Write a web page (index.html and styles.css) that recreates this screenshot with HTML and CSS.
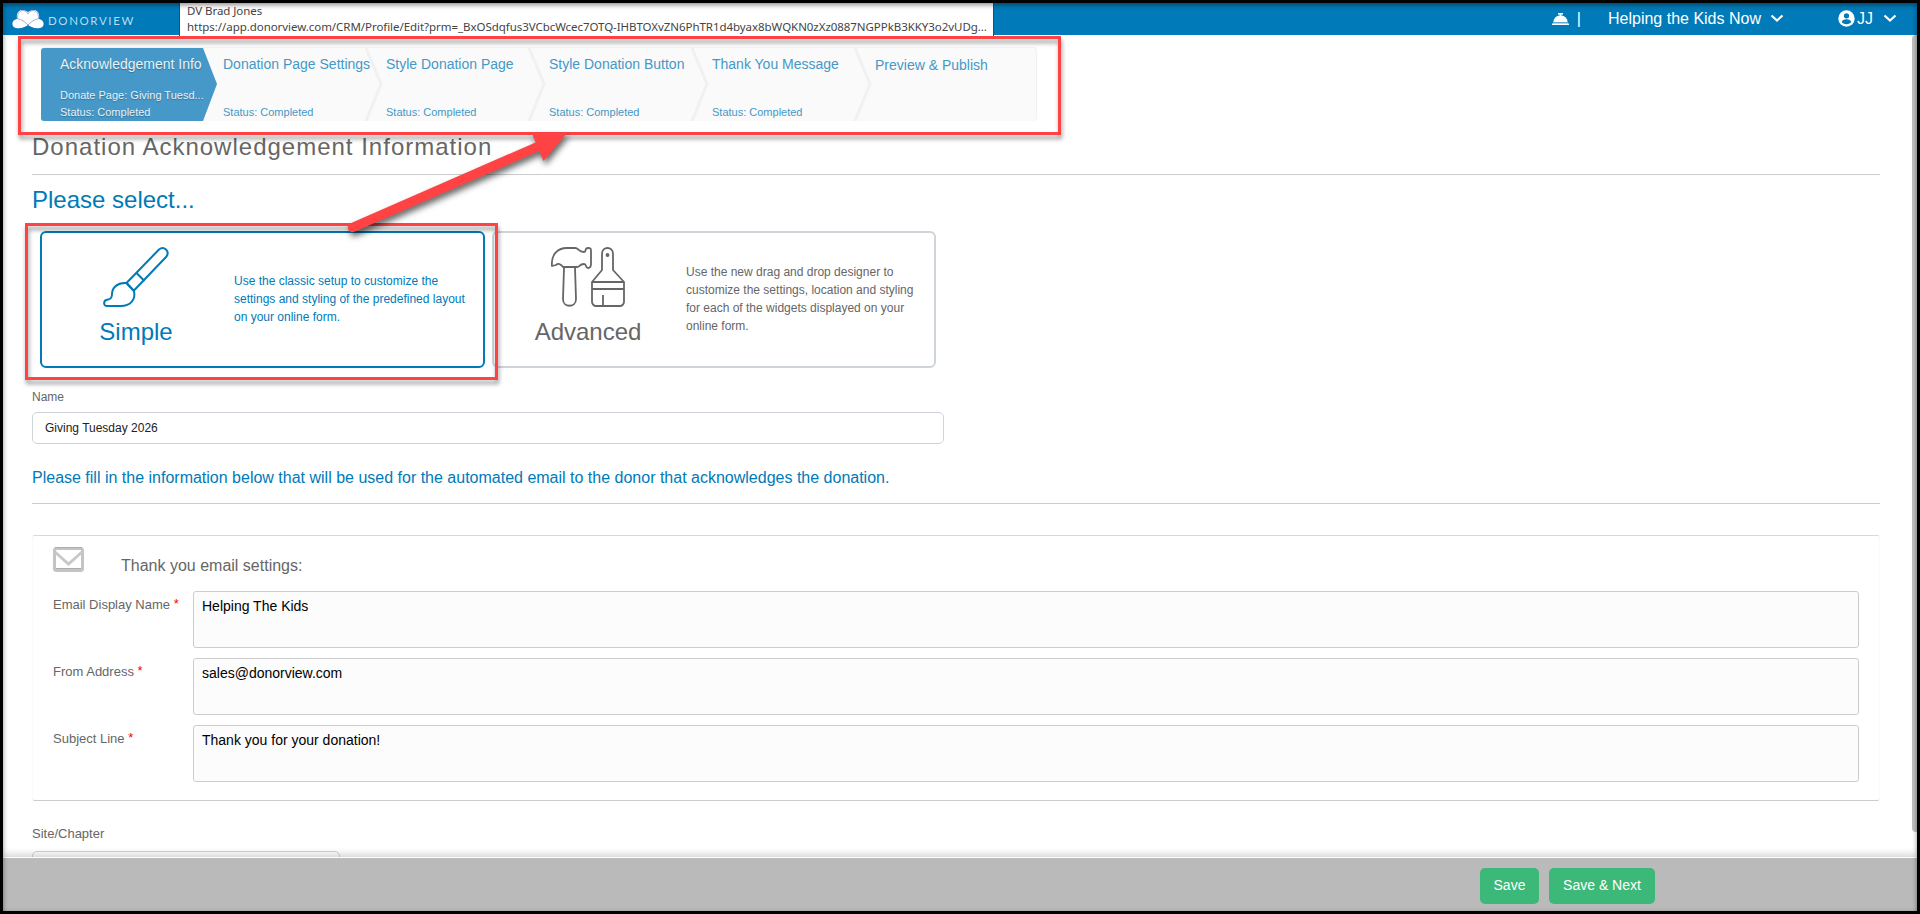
FILE: index.html
```html
<!DOCTYPE html>
<html>
<head>
	<title>Donation Acknowledgement Information</title>
	<meta charset="utf-8" />
	<link rel="stylesheet" href="styles.css">
</head>
<body>
<div id="header">
	<div class="logo">
		<svg width="32" height="20" viewBox="0 0 32 20">
			<path d="M4 19c-5-1-5-8 1-9C4 4 7 1 10 1c3 0 4 1 6 2 2-1 3-2 6-2 3 0 6 3 5 9 6 1 6 8 1 9-5 1-9-1-12-3-3 2-7 4-12 3z" fill="#fff"/>
			<path d="M5.500 10C5 4 8 1.500 11 1.500c3 0 4 2 5 3.500 1-1.500 2-3.500 5-3.500 3 0 6 2.500 5.500 8.500M6 10c3 0 7 3 10 6 3-3 7-6 10-6" fill="none" stroke="#a3a9d2" stroke-width="1"/>
		</svg>
		<span>DONORVIEW</span>
	</div>
	<div class="account">
		<svg class="bell" width="18" height="14" viewBox="0 0 18 14"><path d="M6 1h5v1.500h-1.600V3.500a6.500 6.500 0 0 1 6.100 6.500H1.500a6.500 6.500 0 0 1 6.100-6.500V2.500H6z" fill="#fff"/><path d="M1 10.500h15v1H1z" fill="#b5dcf0"/><path d="M0 11.500h17V13H0z" fill="#fff"/></svg>
		<span class="sep">|</span>
		<span class="org">Helping the Kids Now</span>
		<svg class="caret" width="14" height="9" viewBox="0 0 14 9"><path d="M1.500 1.500l5.500 5 5.500-5" fill="none" stroke="#fff" stroke-width="2.200"/></svg>
		<svg class="user" width="17" height="17" viewBox="0 0 17 17"><circle cx="8.500" cy="8.500" r="8.200" fill="#fff"/><circle cx="8.500" cy="5.800" r="2.600" fill="#007ab8"/><path d="M3.800 12.300c0-4 9.400-4 9.400 0-2.500 2.600-6.900 2.600-9.400 0z" fill="#007ab8"/></svg>
		<span class="initials">JJ</span>
		<svg class="caret" width="14" height="9" viewBox="0 0 14 9"><path d="M1.500 1.500l5.500 5 5.500-5" fill="none" stroke="#fff" stroke-width="2.200"/></svg>
	</div>
</div>
<div id="content">
	<div class="wizard">
		<div class="step active">
			<svg class="chevron" width="176" height="73" viewBox="0 0 176 73"><path d="M3 0h159l14 36-14 37H3a3 3 0 0 1-3-3V3a3 3 0 0 1 3-3z" fill="#4598c7"/></svg>
			<div class="step-name">Acknowledgement Info</div>
			<div class="step-status"><div class="page">Donate Page: Giving Tuesd...</div>Status: Completed</div>
		</div>
		<div class="step">
			<svg class="edge" width="18" height="73" viewBox="0 0 18 73"><path d="M1 0l15 36L1 73" fill="none" stroke="#f1f1f1" stroke-width="3"/></svg>
			<div class="step-name">Donation Page Settings</div>
			<div class="step-status">Status: Completed</div>
		</div>
		<div class="step">
			<svg class="edge" width="18" height="73" viewBox="0 0 18 73"><path d="M1 0l15 36L1 73" fill="none" stroke="#f1f1f1" stroke-width="3"/></svg>
			<div class="step-name">Style Donation Page</div>
			<div class="step-status">Status: Completed</div>
		</div>
		<div class="step">
			<svg class="edge" width="18" height="73" viewBox="0 0 18 73"><path d="M1 0l15 36L1 73" fill="none" stroke="#f1f1f1" stroke-width="3"/></svg>
			<div class="step-name">Style Donation Button</div>
			<div class="step-status">Status: Completed</div>
		</div>
		<div class="step">
			<svg class="edge" width="18" height="73" viewBox="0 0 18 73"><path d="M1 0l15 36L1 73" fill="none" stroke="#f1f1f1" stroke-width="3"/></svg>
			<div class="step-name">Thank You Message</div>
			<div class="step-status">Status: Completed</div>
		</div>
		<div class="step last">
			<div class="step-name">Preview &amp; Publish</div>
		</div>
	</div>
	<h1>Donation Acknowledgement Information</h1>
	<h2>Please select...</h2>
	<div class="choices">
		<div class="choice selected">
			<div class="kind">
				<svg width="68" height="62" viewBox="0 0 68 62" fill="none" stroke="currentColor" stroke-width="2" stroke-linejoin="round">
					<path d="M24.500 37L57 3.500c5-4 11 1.500 7.500 7L31.500 45"/>
					<path d="M34.500 27l8 8M24.500 37l7.500 8"/>
					<path d="M24.500 37c-9-1-14.500 5-14.500 11 0 5-2 5-4 5.500-5 .5-5 6.500-1 6.500h14c9 0 15-6 13-15z"/>
				</svg>
				<div class="kind-name">Simple</div>
			</div>
			<div class="about">Use the classic setup to customize the<br>settings and styling of the predefined layout<br>on your online form.</div>
		</div>
		<div class="choice">
			<div class="kind">
				<svg width="74" height="62" viewBox="0 0 74 62" fill="none" stroke="currentColor" stroke-width="1.800" stroke-linejoin="round">
					<path d="M1 20c-1-11 5-18 15-18h8c4 0 3 4 9 4 3 0 0-4 4-4 3 0 3 1 3 3v13c0 2 0 4-3 4s-1-4-4-4c-5 0-4 3-7 3H12c-2-3-5-4-7-2z"/>
					<path d="M13 22l-1 31c0 9 13 9 13 0l-1-31"/>
					<path d="M51 24V8c0-8 11-8 11 0v16l11 12v20c0 2-2 4-4 4H45c-2 0-4-2-4-4V36zM41 36h32M41 43h32M52 49v11"/>
					<circle cx="56.500" cy="9" r="1" fill="currentColor"/>
				</svg>
				<div class="kind-name">Advanced</div>
			</div>
			<div class="about">Use the new drag and drop designer to<br>customize the settings, location and styling<br>for each of the widgets displayed on your<br>online form.</div>
		</div>
	</div>
	<label class="name-label">Name</label>
	<div class="name-input">Giving Tuesday 2026</div>
	<div class="hint">Please fill in the information below that will be used for the automated email to the donor that acknowledges the donation.</div>
	<div class="panel">
		<div class="panel-title">
			<svg width="31" height="25" viewBox="0 0 31 25"><rect x="1.500" y="1.500" width="28" height="22" rx="2" fill="#fff" stroke="#c4c4c4" stroke-width="3"/><path d="M2 5l13.500 12L29 5" fill="none" stroke="#c8c8c8" stroke-width="3"/><path d="M2 .500h27M3 21.500h25" stroke="#acacac" stroke-width="1"/></svg>
			<span>Thank you email settings:</span>
		</div>
		<div class="row"><label>Email Display Name <b>*</b></label><div class="field">Helping The Kids</div></div>
		<div class="row"><label>From Address <b>*</b></label><div class="field">sales@donorview.com</div></div>
		<div class="row"><label>Subject Line <b>*</b></label><div class="field">Thank you for your donation!</div></div>
	</div>
	<label class="site-label">Site/Chapter</label>
	<div class="site-input"></div>
</div>
<div id="footer">
	<button class="save">Save</button>
	<button class="next">Save &amp; Next</button>
</div>
<div class="scrollbar"></div>
<div class="link-tip">DV Brad Jones<br>https://app.donorview.com/CRM/Profile/Edit?prm=_BxOSdqfus3VCbcWcec7OTQ-IHBTOXvZN6PhTR1d4byax8bWQKN0zXz0887NGPPkB3KKY3o2vUDg...</div>
<div class="mark mark-steps"></div>
<div class="mark mark-simple"></div>
<svg class="arrow" width="240" height="130" viewBox="0 0 240 130"><path d="M22.500 107.500L208 26.500" stroke="#ff4344" stroke-width="9.500" stroke-linecap="round"/><path d="M201.500 12.500h36L213.500 41z" fill="#ff4344"/></svg>
<div class="frame"></div>
</body>
</html>
```
FILE: styles.css
```css
*{
	box-sizing: border-box;
}
body{
	margin: 0px;
	height: 914px;
	padding: 3px;
	overflow: hidden;
	position: relative;
	display: flex;
	flex-direction: column;
	font-family: "Liberation Sans", Arial, sans-serif;
	font-size: 12px;
	color: #666;
	background-color: #fff;
}
#header{
	flex: none;
	height: 32px;
	display: flex;
	justify-content: space-between;
	background-color: #007ab8;
	color: #fff;
}
.logo{
	display: flex;
	align-items: center;
	padding-left: 9px;
	font-family: Lato, sans-serif;
	font-size: 11.5px;
	letter-spacing: 1.6px;
	color: #b8dcf0;
}
.logo span{
	margin: 2px 0 0 4px;
}
.account{
	display: flex;
	align-items: center;
	font-size: 16px;
	padding: 0 20px 1px 0;
}
.sep{
	margin: 0 27px 0 7px;
}
.org{
	width: 152px;
	white-space: nowrap;
}
.account .caret{
	margin-left: 10px;
}
.user{
	margin: 0 2px 0 54px;
}
#content{
	flex: 1;
	min-height: 0;
	overflow: hidden;
	padding: 12px 37px 0 29px;
}
.wizard{
	display: flex;
	width: 996px;
	height: 74px;
	margin-left: 9px;
	border: 1px solid #f1f1f1;
	border-bottom: 0;
	border-radius: 4px;
	background-color: #fafafa;
	color: #4598c7;
}
.step{
	position: relative;
	width: 163px;
	padding: 7px 0 0 18px;
	display: flex;
	flex-direction: column;
	justify-content: space-between;
	white-space: nowrap;
}
.step.active{
	color: #e8f1f7;
	text-shadow: 0 1px 1px rgba(0,0,0,.25);
}
.chevron{
	position: absolute;
	left: -1px;
	top: 0;
}
.edge{
	position: absolute;
	right: -15px;
	top: 0;
}
.step-name{
	position: relative;
	font-size: 14px;
	line-height: 18px;
}
.last .step-name{
	margin-top: 1px;
}
.step-status{
	position: relative;
	font-size: 11px;
	line-height: 17px;
}
h1{
	height: 54px;
	margin: 0px;
	padding-top: 12px;
	border-bottom: 1px solid #ccc;
	font-size: 24px;
	font-weight: normal;
	letter-spacing: 1px;
	line-height: 28px;
}
h2{
	margin: 10px 0 17px;
	font-size: 24px;
	font-weight: normal;
	line-height: 29px;
	color: #007ab8;
}
.choices{
	display: flex;
	gap: 7px;
	margin-left: 8px;
}
.choice{
	display: flex;
	width: 444px;
	height: 137px;
	border: 2px solid #ced4da;
	border-radius: 6px;
}
.choice.selected{
	width: 445px;
	border-color: #007ab8;
	color: #007ab8;
}
.kind{
	width: 192px;
	padding: 13px 4px 0 0;
	text-align: center;
}
.kind svg{
	display: block;
	margin: 0 auto;
}
.kind-name{
	margin-top: 9px;
	font-size: 24px;
	line-height: 30px;
}
.about{
	align-self: center;
	line-height: 18px;
	white-space: nowrap;
	padding-bottom: 2px;
}
label{
	display: block;
}
.name-label{
	margin-top: 21px;
	line-height: 16px;
}
.name-input{
	width: 912px;
	height: 32px;
	margin-top: 7px;
	padding: 0 12px;
	border: 1px solid #ced4da;
	border-radius: 5px;
	line-height: 30px;
	color: #222;
}
.hint{
	height: 60px;
	padding-top: 24px;
	border-bottom: 1px solid #ccc;
	font-size: 16px;
	line-height: 20px;
	color: #007ab8;
}
.panel{
	margin-top: 31px;
	height: 266px;
	padding: 11px 20px 0 20px;
	border: 1px solid #fafafa;
	border-top-color: #d8d8d8;
	border-bottom-color: #ccc;
	border-radius: 3px;
}
.panel-title{
	display: flex;
	height: 44px;
	font-size: 16px;
}
.panel-title span{
	margin: 10px 0 0 37px;
}
.row{
	display: flex;
	height: 57px;
	margin-bottom: 10px;
}
.row label{
	width: 140px;
	padding-top: 6px;
	font-size: 13px;
	line-height: 15px;
}
.row b{
	color: red;
	font-weight: normal;
	position: relative;
	top: -1px;
}
.field{
	flex: 1;
	padding: 6px 8px;
	border: 1px solid #ccc;
	border-radius: 3px;
	background-color: #fcfcfc;
	font-size: 14px;
	color: #000;
}
.site-label{
	margin-top: 25px;
	font-size: 13px;
	line-height: 15px;
}
.site-input{
	width: 308px;
	height: 32px;
	margin-top: 10px;
	border: 1px solid #ced4da;
	border-radius: 5px;
}
#footer{
	position: relative;
	flex: none;
	display: flex;
	gap: 10px;
	height: 53px;
	padding: 10px 0 0 1477px;
	background-color: #bababa;
	box-shadow: 0 -1px 0 #fff, 0 -2px 8px 1px rgba(0,0,0,.2);
}
#footer button{
	height: 36px;
	padding: 0 0 2px;
	border: 0;
	border-radius: 5px;
	background-color: #3cb878;
	color: #fff;
	font: 14px "Liberation Sans", Arial, sans-serif;
}
#footer .save{
	width: 59px;
}
#footer .next{
	width: 106px;
}
.scrollbar{
	position: absolute;
	right: 3px;
	top: 35px;
	width: 5px;
	height: 797px;
	border-radius: 4px 0 0 4px;
	background-color: #c1c1c1;
}
.link-tip{
	position: absolute;
	left: 179px;
	top: 3px;
	width: 815px;
	height: 33px;
	padding: 0 0 0 7px;
	border: 1px solid #444;
	border-width: 0 1px;
	background-color: #fff;
	font-family: "Noto Sans", sans-serif;
	font-size: 11.5px;
	line-height: 16px;
	letter-spacing: -.05px;
	white-space: nowrap;
	color: #444;
}
.mark{
	position: absolute;
	border: 3px solid #ff4344;
	filter: drop-shadow(1px 4px 2px rgba(0,0,0,.4));
}
.mark-steps{
	left: 18px;
	top: 36px;
	width: 1043px;
	height: 99px;
}
.mark-simple{
	left: 25px;
	top: 223px;
	width: 473px;
	height: 157px;
}
.arrow{
	position: absolute;
	left: 330px;
	top: 120px;
	filter: drop-shadow(2px 4px 3px rgba(0,0,0,.6));
}
/* black frame round the whole window */
.frame{
	position: absolute;
	left: 0;
	top: 0;
	width: 1920px;
	height: 914px;
	border: 3px solid #000;
	box-shadow: inset 0 2px 5px rgba(0,0,0,.45);
	pointer-events: none;
}
```
